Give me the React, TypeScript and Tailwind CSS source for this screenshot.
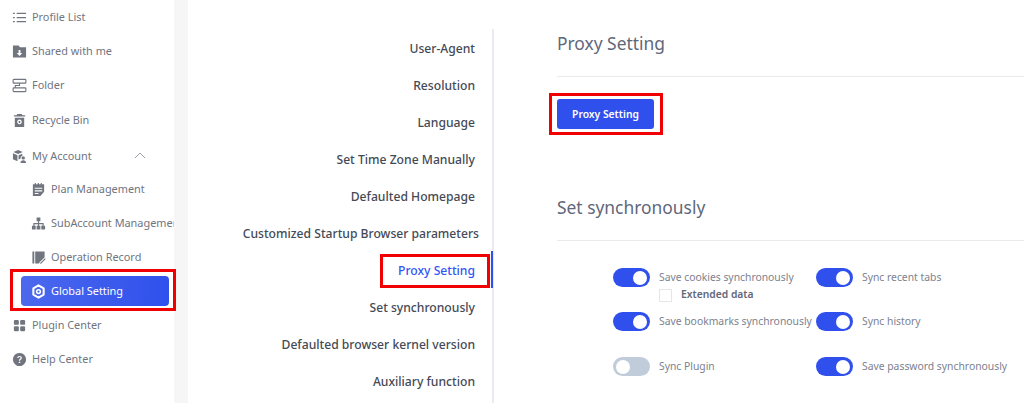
import React from "react";

const P = ({ children }: { children: React.ReactNode }) => (
  <svg width="15" height="15" viewBox="0 0 16 16" fill="#70757f">{children}</svg>
);

const icons: Record<string, React.ReactNode> = {
  list: (
    <P>
      <path d="M1 3h2v1.300H1zM5 3h10v1.300H5zM1 7.400h2v1.300H1zM5 7.400h10v1.300H5zM1 11.800h2v1.300H1zM5 11.800h10v1.300H5z" />
    </P>
  ),
  shared: (
    <P>
      <path fillRule="evenodd" d="M1 1.500h6l1.500 2H15v11H1zM7 6.500v3.200H5l3 3 3-3H9V6.500z" />
    </P>
  ),
  folder: (
    <P>
      <path
        fill="none"
        stroke="#70757f"
        strokeWidth="1.200"
        d="M2 1.500h12a.8.8 0 0 1 .8.8v2.400a.8.8 0 0 1-.8.8H2a.8.8 0 0 1-.8-.8V2.300a.8.8 0 0 1 .8-.8zM2 10.500h12a.8.8 0 0 1 .8.8v2.400a.8.8 0 0 1-.8.8H2a.8.8 0 0 1-.8-.8v-2.400a.8.8 0 0 1 .8-.8zM8 5.500v2.500H3.500v2.500"
      />
    </P>
  ),
  bin: (
    <P>
      <path fillRule="evenodd" d="M5.500 1h5l.5 1.500h3v1.300H2V2.500h3zM3 5h10v10H3zM8 7a2.500 2.500 0 1 0 .01 0zM8 8.500a1 1 0 1 1-.01 0z" />
    </P>
  ),
  account: (
    <P>
      <path d="M6.500 1l5 2.200-5 2.200-5-2.200zM1 4.500l4.800 2.100v6.400L1 10.900zM7 6.700l4-1.700v2.200a3 3 0 0 0-2 3.100l-2 1z" />
      <circle cx="12" cy="9.500" r="1.800" />
      <path d="M9 15c0-2 1.300-3 3-3s3 1 3 3z" />
    </P>
  ),
  plan: (
    <P>
      <path fillRule="evenodd" d="M2 2.500h2V1h1.200v1.500h2V1h1.200v1.500h2V1h1.200v1.500H14v8l-4 4.500H2zM4 6v1.200h8V6zM4 8.800V10h8V8.800zM4 11.600v1.200h4v-1.200z" />
    </P>
  ),
  org: (
    <P>
      <path d="M6 1.500h4v4H8.600v2h4.900v3H15v4h-4v-4h1.300V8.800H8.600v1.700H10v4H6v-4h1.400V8.800H3.700v1.700H5v4H1v-4h1.500v-3h4.900v-2H6z" />
    </P>
  ),
  record: (
    <P>
      <path fillRule="evenodd" d="M1.500 1.500h2v13h-2zM4.500 1.500h10v6.300L9.200 13l-.6 1.500H4.500zM14.800 8.800l.9.900-5 5H9.800v-.9z" />
    </P>
  ),
  gear: (
    <svg width="15" height="15" viewBox="0 0 16 16" fill="none">
      <path
        d="M8 1.500l5.500 3.200v6.600L8 14.500l-5.500-3.200V4.700z"
        stroke="#fff"
        strokeWidth="2.200"
        strokeLinejoin="round"
      />
      <circle cx="8" cy="8" r="2" stroke="#fff" strokeWidth="1.600" />
    </svg>
  ),
  plugin: (
    <P>
      <rect x="2" y="2" width="5.300" height="5.300" rx="1.300" />
      <rect x="8.700" y="2" width="5.300" height="5.300" rx="1.300" />
      <rect x="2" y="8.700" width="5.300" height="5.300" rx="1.300" />
      <rect x="8.700" y="8.700" width="5.300" height="5.300" rx="1.300" />
    </P>
  ),
  help: (
    <P>
      <path
        fillRule="evenodd"
        d="M8 1a7 7 0 1 0 .01 0zM8 4.200c1.500 0 2.500.9 2.500 2.100 0 1.700-1.800 1.700-1.800 3H7.300c0-2 1.800-2 1.800-3 0-.5-.5-.9-1.100-.9-.7 0-1.100.4-1.200 1.100H5.500C5.600 5.100 6.500 4.200 8 4.200zM7.200 10.300h1.600v1.500H7.200z"
      />
    </P>
  ),
};

const Row = ({
  icon,
  label,
  sub,
  cls = "",
}: {
  icon: string;
  label: string;
  sub?: boolean;
  cls?: string;
}) => (
  <div className={`flex h-[34px] items-center overflow-hidden whitespace-nowrap ${sub ? "pl-[31px]" : "pl-[12px]"} ${cls}`}>
    <span className="flex w-[20px] shrink-0">{icons[icon]}</span>
    <span className="text-[10.900px] text-[#70757f]">{label}</span>
  </div>
);

const Toggle = ({ on = true }: { on?: boolean }) => (
  <span
    className={`flex h-[19px] w-[37px] shrink-0 items-center rounded-full px-[3px] ${
      on ? "justify-end bg-[#2f50ec]" : "justify-start bg-[#c1ccdb]"
    }`}
  >
    <span className="h-[14px] w-[14px] rounded-full bg-white" />
  </span>
);

const Setting = ({ label, on }: { label: string; on?: boolean }) => (
  <div className="flex items-center gap-[9px] whitespace-nowrap">
    <Toggle on={on} />
    <span className="text-[10.350px] text-[#7d8290]">{label}</span>
  </div>
);

const navItems = [
  "User-Agent",
  "Resolution",
  "Language",
  "Set Time Zone Manually",
  "Defaulted Homepage",
  "Customized Startup Browser parameters",
  "Proxy Setting",
  "Set synchronously",
  "Defaulted browser kernel version",
  "Auxiliary function",
];

export default function App() {
  return (
    <div className="flex h-[403px] w-[1024px] overflow-hidden bg-white font-['Noto_Sans',sans-serif]">
      <aside className="h-full w-[174px] shrink-0 bg-white">
        <Row icon="list" label="Profile List" />
        <Row icon="shared" label="Shared with me" />
        <Row icon="folder" label="Folder" />
        <Row icon="bin" label="Recycle Bin" cls="mt-px" />
        <div className="relative mt-[2px]">
          <Row icon="account" label="My Account" />
          <svg
            className="absolute left-[134px] top-[13px]"
            width="12"
            height="7"
            viewBox="0 0 12 7"
            fill="none"
            stroke="#9a9fa8"
            strokeWidth="1"
          >
            <path d="M1 6l5-5 5 5" />
          </svg>
        </div>
        <Row icon="plan" label="Plan Management" sub cls="-mt-px" />
        <Row icon="org" label="SubAccount Management" sub />
        <Row icon="record" label="Operation Record" sub />
        <div className="relative ml-[21px] mt-[2px] flex h-[30px] w-[148px] items-center rounded-[4px] bg-[linear-gradient(100deg,#4c69ee,#2f50ec)] pl-[10px]">
          <span className="flex w-[20px] shrink-0">{icons.gear}</span>
          <span className="text-[10.900px] text-white">Global Setting</span>
          <span className="absolute bottom-[-5px] left-[-11px] right-[-7px] top-[-7px] border-[3px] border-[#f00000]" />
        </div>
        <Row icon="plugin" label="Plugin Center" cls="mt-[2px]" />
        <Row icon="help" label="Help Center" />
      </aside>

      <div className="h-full w-[14px] shrink-0 bg-[#f6f6f7]" />

      <main className="flex h-full flex-1">
        <nav className="mt-[29px] w-[306px] shrink-0 border-r-2 border-[#e9e9f2] pr-[17px] pt-[2px]">
          {navItems.map((item) => {
            const active = item === "Proxy Setting";
            const long = item.startsWith("Customized");
            return (
              <div key={item} className="relative flex h-[37px] items-center justify-end">
                <span
                  className={`whitespace-nowrap text-[12.150px] font-medium ${
                    active ? "text-[#3355f5]" : "text-[#444a55]"
                  } ${long ? "mr-[-4px]" : ""}`}
                >
                  {item}
                </span>
                {active && (
                  <>
                    <span className="absolute bottom-[2px] left-[192px] right-[-15px] top-px border-[3px] border-[#f00000]" />
                    <span className="absolute bottom-[2px] right-[-18px] top-[-2px] w-[2px] bg-[#2f50ec]" />
                  </>
                )}
              </div>
            );
          })}
        </nav>

        <section className="ml-[63px] flex-1 pt-[30px]">
          <h2 className="h-[26px] text-[17.400px] leading-[26px] font-normal text-[#5f677a]">Proxy Setting</h2>
          <div className="mt-[20px] h-px bg-[#e9e9ee]" />
          <div className="relative mt-[22px] flex h-[30px] w-[97px] items-center justify-center rounded-[3px] bg-[#2f50ec] pt-px text-[10.300px] font-semibold text-white">
            Proxy Setting
            <span className="absolute bottom-[-6px] left-[-8px] right-[-9px] top-[-6px] border-[3px] border-[#f00000]" />
          </div>
          <h2 className="mt-[65px] h-[26px] text-[17.400px] leading-[26px] font-normal text-[#5f677a]">Set synchronously</h2>
          <div className="mt-[20px] h-px bg-[#e9e9ee]" />
          <div className="ml-[56px] mt-[27px] grid w-[420px] grid-cols-[203px_1fr]">
            <div className="h-[44px]">
              <Setting label="Save cookies synchronously" />
              <div className="ml-[46px] mt-[-1px] flex h-[18px] items-center gap-[9px]">
                <span className="h-[13px] w-[13px] border border-[#e6e6ea] bg-white" />
                <span className="text-[10.300px] font-semibold text-[#626878]">Extended data</span>
              </div>
            </div>
            <div className="h-[44px]">
              <Setting label="Sync recent tabs" />
            </div>
            <div className="h-[45px]">
              <Setting label="Save bookmarks synchronously" />
            </div>
            <div className="h-[45px]">
              <Setting label="Sync history" />
            </div>
            <Setting label="Sync Plugin" on={false} />
            <Setting label="Save password synchronously" />
          </div>
        </section>
      </main>
    </div>
  );
}
